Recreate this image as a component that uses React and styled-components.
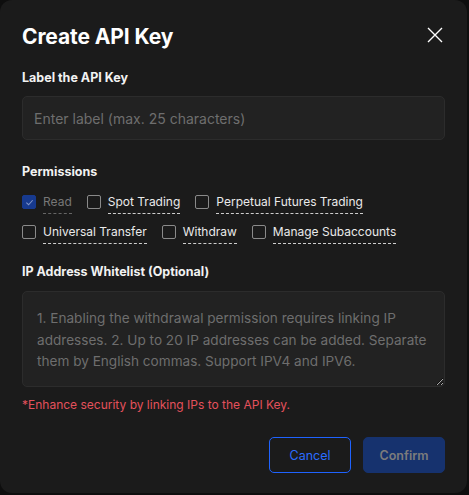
import React from "react";
import styled, { createGlobalStyle } from "styled-components";

const Global = createGlobalStyle`
  html, body { margin: 0; padding: 0; background: #0e0e0e; }
  body { font-family: Inter, "Noto Sans", sans-serif; -webkit-font-smoothing: antialiased; }
  * { box-sizing: border-box; }
`;

const Page = styled.div`
  width: 469px;
  height: 495px;
  background: #0e0e0e;
  display: flex;
  align-items: flex-start;
`;

const Modal = styled.div`
  width: 467px;
  height: 493px;
  background: #1b1b1b;
  border-radius: 12px;
  padding: 22px 22px 0 22px;
  display: flex;
  flex-direction: column;
  color: #fff;
`;

const Header = styled.div`
  display: flex;
  align-items: flex-start;
  justify-content: space-between;
  height: 24px;
  margin-top: 3px;
`;

const Title = styled.h2`
  margin: 0;
  font-size: 21px;
  line-height: 24px;
  font-weight: 700;
  letter-spacing: -0.1px;
  color: #fff;
`;

const Close = styled.button`
  background: none;
  border: none;
  padding: 0;
  margin-right: 2px;
  margin-top: 2px;
  width: 16px;
  height: 16px;
  display: flex;
  align-items: center;
  justify-content: center;
  cursor: pointer;
`;

const Label = styled.div`
  font-size: 12.5px;
  font-weight: 700;
  color: #f2f2f2;
  margin-top: ${(p) => p.$mt}px;
  line-height: 16px;
`;

const Input = styled.input`
  margin-top: 10px;
  width: 423px;
  height: 44px;
  flex-shrink: 0;
  background: #222222;
  border: 1px solid #2c2c2c;
  border-radius: 5px;
  padding: 0 11px;
  font-family: inherit;
  font-size: 14px;
  color: #fff;
  outline: none;
  &::placeholder { color: #6e6e6e; }
`;

const Grid = styled.div`
  margin-top: 14px;
  display: flex;
  flex-direction: column;
  gap: 10px;
`;

const Row = styled.div`
  display: flex;
  align-items: flex-start;
  gap: 15px;
`;

const Option = styled.label`
  display: flex;
  align-items: flex-start;
  gap: 7px;
  cursor: pointer;
`;

const Box = styled.span`
  width: 14px;
  height: 14px;
  margin-top: 1px;
  border-radius: 2px;
  border: 1px solid ${(p) => (p.$checked ? "#173a8f" : "#8a8a8a")};
  background: ${(p) => (p.$checked ? "#173a8f" : "transparent")};
  display: flex;
  align-items: center;
  justify-content: center;
  flex-shrink: 0;
`;

const OptText = styled.span`
  font-size: 12px;
  line-height: 16px;
  color: ${(p) => (p.$disabled ? "#777" : "#eaeaea")};
  border-bottom: 1px dashed ${(p) => (p.$disabled ? "#666" : "#cfcfcf")};
  padding-bottom: 3px;
`;

const Area = styled.textarea`
  margin-top: 11px;
  width: 423px;
  height: 96px;
  flex-shrink: 0;
  background: #222222;
  border: 1px solid #2c2c2c;
  border-radius: 5px;
  padding: 16px 14px 8px 14px;
  font-family: inherit;
  font-size: 13.6px;
  line-height: 21.5px;
  color: #fff;
  outline: none;
  resize: vertical;
  &::placeholder { color: #6e6e6e; }
`;

const Hint = styled.div`
  margin-top: 10px;
  font-size: 12px;
  line-height: 15px;
  color: #e4515c;
`;

const Footer = styled.div`
  margin-top: 25px;
  display: flex;
  justify-content: flex-end;
  gap: 12px;
`;

const Btn = styled.button`
  width: 82px;
  height: 36px;
  border-radius: 5px;
  font-family: inherit;
  font-size: 12.5px;
  cursor: pointer;
  border: 1px solid ${(p) => (p.$primary ? "#16326e" : "#1f63ff")};
  background: ${(p) => (p.$primary ? "#16326e" : "transparent")};
  color: ${(p) => (p.$primary ? "#7c7c7c" : "#2a6cff")};
  font-weight: ${(p) => (p.$primary ? 600 : 400)};
`;

const Check = () => (
  <svg width="9" height="9" viewBox="0 0 10 10">
    <path d="M1.5 5.2 L4 7.5 L8.5 2.5" fill="none" stroke="#7f93c8" strokeWidth="1.2" />
  </svg>
);

const perms = [
  [
    { t: "Read", c: true, d: true },
    { t: "Spot Trading" },
    { t: "Perpetual Futures Trading" },
  ],
  [{ t: "Universal Transfer" }, { t: "Withdraw" }, { t: "Manage Subaccounts" }],
];

export default function App() {
  return (
    <>
      <Global />
      <Page>
        <Modal>
          <Header>
            <Title>Create API Key</Title>
            <Close aria-label="close">
              <svg width="16" height="16" viewBox="0 0 16 16">
                <path d="M1 1 L15 15 M15 1 L1 15" stroke="#fff" strokeWidth="1.4" />
              </svg>
            </Close>
          </Header>
          <Label $mt={21}>Label the API Key</Label>
          <Input placeholder="Enter label (max. 25 characters)" />
          <Label $mt={24}>Permissions</Label>
          <Grid>
            {perms.map((row, i) => (
              <Row key={i}>
                {row.map((o) => (
                  <Option key={o.t}>
                    <Box $checked={o.c}>{o.c && <Check />}</Box>
                    <OptText $disabled={o.d}>{o.t}</OptText>
                  </Option>
                ))}
              </Row>
            ))}
          </Grid>
          <Label $mt={20}>IP Address Whitelist (Optional)</Label>
          <Area placeholder="1. Enabling the withdrawal permission requires linking IP addresses. 2. Up to 20 IP addresses can be added. Separate them by English commas. Support IPV4 and IPV6." />
          <Hint>*Enhance security by linking IPs to the API Key.</Hint>
          <Footer>
            <Btn>Cancel</Btn>
            <Btn $primary>Confirm</Btn>
          </Footer>
        </Modal>
      </Page>
    </>
  );
}
